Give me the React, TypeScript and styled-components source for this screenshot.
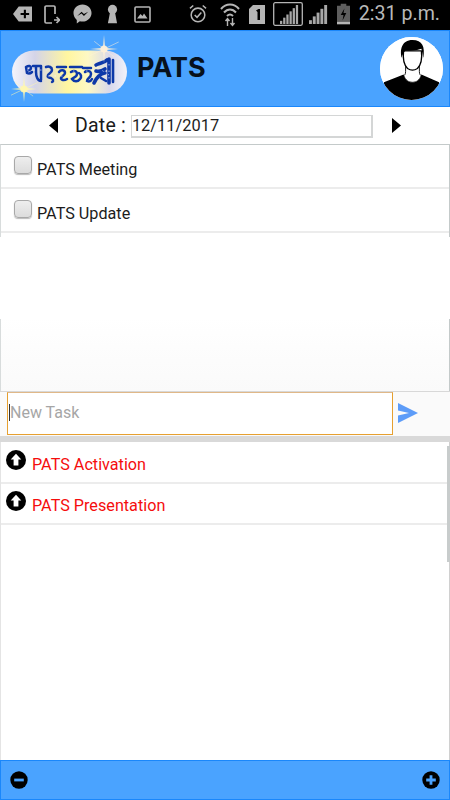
import React from "react";
import styled, { createGlobalStyle } from "styled-components";

const Global = createGlobalStyle`
  html, body { margin: 0; padding: 0; background: #fff; }
  body { width: 450px; height: 800px; overflow: hidden; font-family: Roboto, "Liberation Sans", sans-serif; }
  * { box-sizing: border-box; }
`;

const Page = styled.div`
  position: relative;
  width: 450px;
  height: 800px;
  display: flex;
  flex-direction: column;
  background: #fff;
  overflow: hidden;
`;

const StatusBar = styled.div`
  height: 30px;
  flex: none;
  background: #000;
  display: flex;
  align-items: center;
  padding: 0 10px 2px 13px;
  color: #b5b5b5;
`;
const StatusIcon = styled.svg<{ $ml?: number }>`
  flex: none;
  margin-left: ${(p) => p.$ml ?? 0}px;
`;
const Clock = styled.span`
  margin-left: auto;
  font-size: 19.6px;
  line-height: 28px;
  color: #b9b9b9;
`;

const Header = styled.header`
  height: 77px;
  flex: none;
  background: #4aa3ff;
  border: 1px solid #1a87fb;
  display: flex;
  align-items: center;
  padding: 0 6px 0 10px;
`;
const Title = styled.h1`
  margin: 0 0 2px 8px;
  font: 700 27px/1 Inter, Roboto, sans-serif;
  color: #07111c;
`;
const Avatar = styled.div`
  margin-left: auto;
  width: 63px;
  height: 63px;
  border-radius: 50%;
  overflow: hidden;
  background: #fff;
`;

const DateRow = styled.div`
  height: 37px;
  flex: none;
  display: flex;
  align-items: center;
  padding: 0 0 0 49px;
`;
const DateLabel = styled.span`
  font-size: 19.5px;
  color: #1a1a1a;
  margin: 0 5px 0 17px;
  letter-spacing: 0.2px;
`;
const DateField = styled.div`
  width: 242px;
  height: 23px;
  margin-top: 2px;
  border: 1px solid #d4d6d6;
  border-bottom-width: 2px;
  border-right-width: 2px;
  font-size: 16.4px;
  line-height: 19px;
  padding-left: 0;
  color: #1d1d1d;
`;
const NextArrow = styled.svg`
  margin-left: 19px;
`;

const TodoPanel = styled.section`
  height: 247px;
  flex: none;
  border-top: 1px solid #c4caca;
  border-left: 1px solid #d8dcdc;
  border-right: 1px solid #c4caca;
  position: relative;
  background: linear-gradient(#ffffff 70%, #fafafa 100%);
`;
const TodoRow = styled.div`
  height: 44px;
  display: flex;
  align-items: center;
  border-bottom: 2px solid #ececec;
  padding: 0 0 0 13px;
`;
const Check = styled.span`
  width: 18px;
  height: 18px;
  border: 1px solid #a8a8a8;
  border-radius: 4px;
  background: linear-gradient(#eeeeee, #dcdcdc);
  box-shadow: 0 1px 1px #bbb;
  margin: -3px 5px 0 0;
`;
const TodoText = styled.span`
  font-size: 16.2px;
  color: #1c1c1c;
  margin-top: 6px;
`;
const BorderGap = styled.div`
  position: absolute;
  left: -1px;
  right: -1px;
  top: 92px;
  height: 82px;
  background: #fff;
`;

const InputBar = styled.div`
  height: 45px;
  flex: none;
  display: flex;
  align-items: flex-start;
  padding-left: 7px;
  background: #fafafa;
  border-top: 1px solid #d8d8d8;
`;
const TaskInput = styled.div`
  width: 386px;
  height: 43px;
  background: #fff;
  border: 1px solid #e6a030;
  border-top-color: #e0b888;
  display: flex;
  align-items: center;
  font-size: 16px;
  color: #a6a6a6;
  padding: 0 0 2px 1px;
`;
const Caret = styled.span`
  width: 1px;
  height: 17px;
  background: #333;
`;
const SendIcon = styled.svg`
  margin: 11px 0 0 5px;
`;
const Divider = styled.div`
  height: 6px;
  flex: none;
  background: #d9d9d9;
`;

const PendingPanel = styled.section`
  flex: 1;
  border-left: 1px solid #e4e4e4;
  border-right: 1px solid #d0d0d0;
  position: relative;
`;
const PendingRow = styled.div`
  height: 41.5px;
  display: flex;
  align-items: flex-start;
  padding: 7.5px 0 0 5px;
  border-bottom: 2px solid #ececec;
`;
const PendingText = styled.span`
  font-size: 16.2px;
  color: #f50d0d;
  margin: 4px 0 0 6px;
  line-height: 22px;
`;
const Scrollbar = styled.div`
  position: absolute;
  right: -1px;
  top: 4px;
  width: 3px;
  height: 116px;
  background: #c8cccc;
`;

const Footer = styled.footer`
  height: 40px;
  flex: none;
  background: #4aa3ff;
  border: 1px solid #1a87fb;
  display: flex;
  align-items: center;
  justify-content: space-between;
  padding: 0 9px;
`;

const Plus = () => (
  <svg width="18" height="18" viewBox="0 0 18 18"><circle cx="9" cy="9" r="8.7" fill="#000" /><path d="M9 4.200v9.600M4.200 9h9.600" stroke="#4aa3ff" strokeWidth="2.800" /></svg>
);
const Minus = () => (
  <svg width="18" height="18" viewBox="0 0 18 18"><circle cx="9" cy="9" r="8.700" fill="#000" /><path d="M4.200 9h9.600" stroke="#4aa3ff" strokeWidth="2.800" /></svg>
);
const UpIcon = () => (
  <svg width="20" height="20" viewBox="0 0 20 20"><circle cx="10" cy="10" r="10" fill="#000" /><path d="M10 3.800 15.300 9.600H12.400V15.600H7.600V9.600H4.700Z" fill="#fff" /></svg>
);

const Star = ({ cx, cy, r, c }: { cx: number; cy: number; r: number; c: string }) => (
  <g>
    <path d={`M${cx} ${cy - r}L${cx + 1.2} ${cy - 1.2}L${cx + r} ${cy}L${cx + 1.2} ${cy + 1.2}L${cx} ${cy + r}L${cx - 1.2} ${cy + 1.2}L${cx - r} ${cy}L${cx - 1.2} ${cy - 1.2}Z`} fill={c} opacity=".8" />
    <path d={`M${cx - r * 1.05} ${cy + r * 0.5}L${cx + r * 1.05} ${cy - r * 0.5}M${cx - r * 0.7} ${cy - r * 0.55}L${cx + r * 0.7} ${cy + r * 0.55}`} stroke={c} strokeWidth=".8" opacity=".65" />
    <circle cx={cx} cy={cy} r="3.600" fill={c} opacity=".95" />
  </g>
);

const Logo = () => (
  <svg width="118" height="70" viewBox="0 0 118 70">
    <defs>
      <linearGradient id="pill" x1="0" x2="1" y1="0" y2="0">
        <stop offset="0" stopColor="#f4f4fb" />
        <stop offset=".2" stopColor="#d4d4e8" />
        <stop offset=".48" stopColor="#fff6a0" />
        <stop offset=".66" stopColor="#fdf8c4" />
        <stop offset=".85" stopColor="#d8d8ec" />
        <stop offset="1" stopColor="#f2f2f9" />
      </linearGradient>
      <filter id="soft"><feGaussianBlur stdDeviation=".35" /></filter>
    </defs>
    <rect x="1" y="16.500" width="115" height="43" rx="21.500" fill="url(#pill)" />
    <g fill="none" stroke="#0f38a8" strokeWidth="2.500" strokeLinecap="round" filter="url(#soft)">
      <path d="M15 33c3-2 5-1 5 1s-3 3-4 2M15 33l1 6c2 1 4 0 5-1M22 32h8M25 32v6c0 5 2 9 5 9M30 32v14" />
      <path d="M35 33c3-1 6 0 6 3s-3 3-4 5c-1 2 1 3 3 3 2 1 3 3 1 4" />
      <path d="M46 33h9M48 38c2-3 6-2 6 1 0 2-3 3-4 5 0 2 3 3 6 1" />
      <path d="M59 33h12M60 38c3-2 6-1 6 2s-3 3-5 5c2 3 6 3 8 0 2-2 1-5-1-6" />
      <path d="M72 34h8M74 38c2-2 6-1 6 2 0 4-4 4-4 7 2 1 4 0 5-2" />
      <path d="M85 31c4-2 8-2 11-5M98 25v24M85 37c3 1 6 0 9-2M83 49c2-5 7-10 11-10" strokeWidth="3.600" />
      <path d="M102 26v22M90 44l5 3" strokeWidth="2.600" />
    </g>
    <g fill="none" stroke="#fff" strokeWidth=".7" strokeDasharray="1.500 5" opacity=".85">
      <path d="M16 36h20M37 42h22M62 37h22M86 33l12 8M98 30v16" />
    </g>
    <Star cx={93} cy={15} r={14} c="#fff0d8" />
    <Star cx={13} cy={55} r={13} c="#fff7b0" />
  </svg>
);

const Person = () => (
  <svg width="63" height="63" viewBox="0 0 64 64">
    <rect width="64" height="64" fill="#fff" />
    <path d="M4 46 24 38c2 6 5 8 9 8s7-2 9-8l18 8v18H4Z" fill="#000" />
    <path d="M26 28v7c0 3-1 4-2 4 2 5 5 7 9 7s7-2 9-7c-1 0-2-1-2-4v-7Z" fill="#fff" stroke="#000" strokeWidth=".9" />
    <path d="M24 14c-1 8 0 14 4 18 3 2 7 2 10 0 4-4 5-10 4-18Z" fill="#fff" stroke="#000" strokeWidth="1.300" />
    <path d="M22 21c-2-8 0-18 11-18 10 0 13 7 11 18-1-3-1-6-2-9-6 2-11 2-16 2-2 1-3 4-4 7Z" fill="#000" />
  </svg>
);

const bars = (x: number, w: number, bottom: number, h: number, n: number, c: string) =>
  Array.from({ length: n }, (_, i) => {
    const bw = w / n;
    const bh = (h * (i + 1)) / n;
    return <rect key={i} x={x + i * bw} y={bottom - bh} width={bw - 0.9} height={bh} fill={c} />;
  });

export default function App() {
  return (
    <Page>
      <Global />
      <StatusBar>
        <StatusIcon width="19" height="16" viewBox="0 0 20 16"><path d="M6 0h14v16H6L0 8Z" fill="#b5b5b5" /><path d="M12.500 3.500v9M8 8h9" stroke="#000" strokeWidth="2.200" /></StatusIcon>
        <StatusIcon $ml={12} width="16" height="19" viewBox="0 0 16 19" fill="none" stroke="#b5b5b5" strokeWidth="1.700"><path d="M11 9V2.200C11 1.500 10.500 1 9.800 1H2.200C1.500 1 1 1.500 1 2.200v14.600c0 .7.5 1.200 1.200 1.200H8" /><path d="M10 15h5M12.500 12l3 3-3 3" /></StatusIcon>
        <StatusIcon $ml={13} width="19" height="20" viewBox="0 0 20 20"><path d="M10 0c5.500 0 9.500 4 9.500 9s-4 9-9.500 9c-1 0-2-.1-2.800-.4L4 20v-3.700C2 14.700.5 12 .5 9 .5 4 4.500 0 10 0Z" fill="#b5b5b5" /><path d="M4.500 12 9 7.500l2.500 2.500 4.500-2.500-4.500 4.500L9 9.500Z" fill="#000" /></StatusIcon>
        <StatusIcon $ml={15} width="11" height="20" viewBox="0 0 12 20"><circle cx="6" cy="5" r="5" fill="#b5b5b5" /><path d="M3.500 7h5L11 20H1Z" fill="#b5b5b5" /></StatusIcon>
        <StatusIcon $ml={16} width="17" height="17" viewBox="0 0 17 17"><rect x="1" y="1" width="15" height="15" rx="1" fill="none" stroke="#b5b5b5" strokeWidth="1.600" /><path d="M3 12.500 6.500 8l2 2 1.500-2.500 3.500 5Z" fill="#b5b5b5" /></StatusIcon>
        <StatusIcon $ml={38} width="18" height="20" viewBox="0 0 19 20" fill="none" stroke="#b5b5b5" strokeWidth="1.600"><circle cx="9.500" cy="11" r="7.200" /><path d="M6 11l2.500 2.500L13 8.500M1 4l3.500-3M18 4l-3.500-3" /></StatusIcon>
        <StatusIcon $ml={13} width="20" height="25" viewBox="0 0 20 25" fill="none" stroke="#b5b5b5" strokeWidth="2"><path d="M1 7c5-6 13-6 18 0M4 10.500c3.500-4 8.500-4 12 0M7 14c2-2 4-2 6 0" /><path d="M7.500 24v-7M5.500 19l2-2.500 2 2.500M12.500 16v7M10.500 21l2 2.500 2-2.500" strokeWidth="1.400" /></StatusIcon>
        <StatusIcon $ml={9} width="16" height="19" viewBox="0 0 16 19"><path d="M4 0h12v19H0V4Z" fill="#b5b5b5" /><path d="M7 5.500l2.500-1.500h1.500v11H8.500V7Z" fill="#000" /></StatusIcon>
        <StatusIcon $ml={8} width="30" height="24" viewBox="0 0 30 24"><rect x=".7" y=".7" width="28.600" height="22.600" rx="1.500" fill="none" stroke="#b5b5b5" strokeWidth="1.300" />{bars(7, 19, 22, 19, 6, "#a8a8a8")}</StatusIcon>
        <StatusIcon $ml={6} width="19" height="19" viewBox="0 0 19 19">{bars(0, 19, 19, 19, 5, "#a8a8a8")}</StatusIcon>
        <StatusIcon $ml={9} width="13" height="22" viewBox="0 0 14 22"><path d="M4 0h6v2h4v20H0V2h4Z" fill="#5e5e5e" /><path d="M8 5 4 12h3l-1 6 4-8H7Z" fill="#000" /><rect y="19.500" width="14" height="2.500" fill="#b5b5b5" /></StatusIcon>
        <Clock>2:31 p.m.</Clock>
      </StatusBar>

      <Header>
        <Logo />
        <Title>PATS</Title>
        <Avatar><Person /></Avatar>
      </Header>

      <DateRow>
        <svg width="9" height="15" viewBox="0 0 9 15"><path d="M9 0v15L0 7.500Z" fill="#000" /></svg>
        <DateLabel>Date :</DateLabel>
        <DateField>12/11/2017</DateField>
        <NextArrow width="9" height="15" viewBox="0 0 9 15"><path d="M0 0v15l9-7.500Z" fill="#000" /></NextArrow>
      </DateRow>

      <TodoPanel>
        <TodoRow><Check /><TodoText>PATS Meeting</TodoText></TodoRow>
        <TodoRow><Check /><TodoText>PATS Update</TodoText></TodoRow>
        <BorderGap />
      </TodoPanel>

      <InputBar>
        <TaskInput><Caret />New Task</TaskInput>
        <SendIcon width="20" height="20" viewBox="0 0 20 20"><path d="M0 0 20 10 0 20V12.500L11 10 0 7.500Z" fill="#5d9cf8" /></SendIcon>
      </InputBar>
      <Divider />

      <PendingPanel>
        <PendingRow><UpIcon /><PendingText>PATS Activation</PendingText></PendingRow>
        <PendingRow><UpIcon /><PendingText>PATS Presentation</PendingText></PendingRow>
        <Scrollbar />
      </PendingPanel>

      <Footer>
        <Minus />
        <Plus />
      </Footer>
    </Page>
  );
}
